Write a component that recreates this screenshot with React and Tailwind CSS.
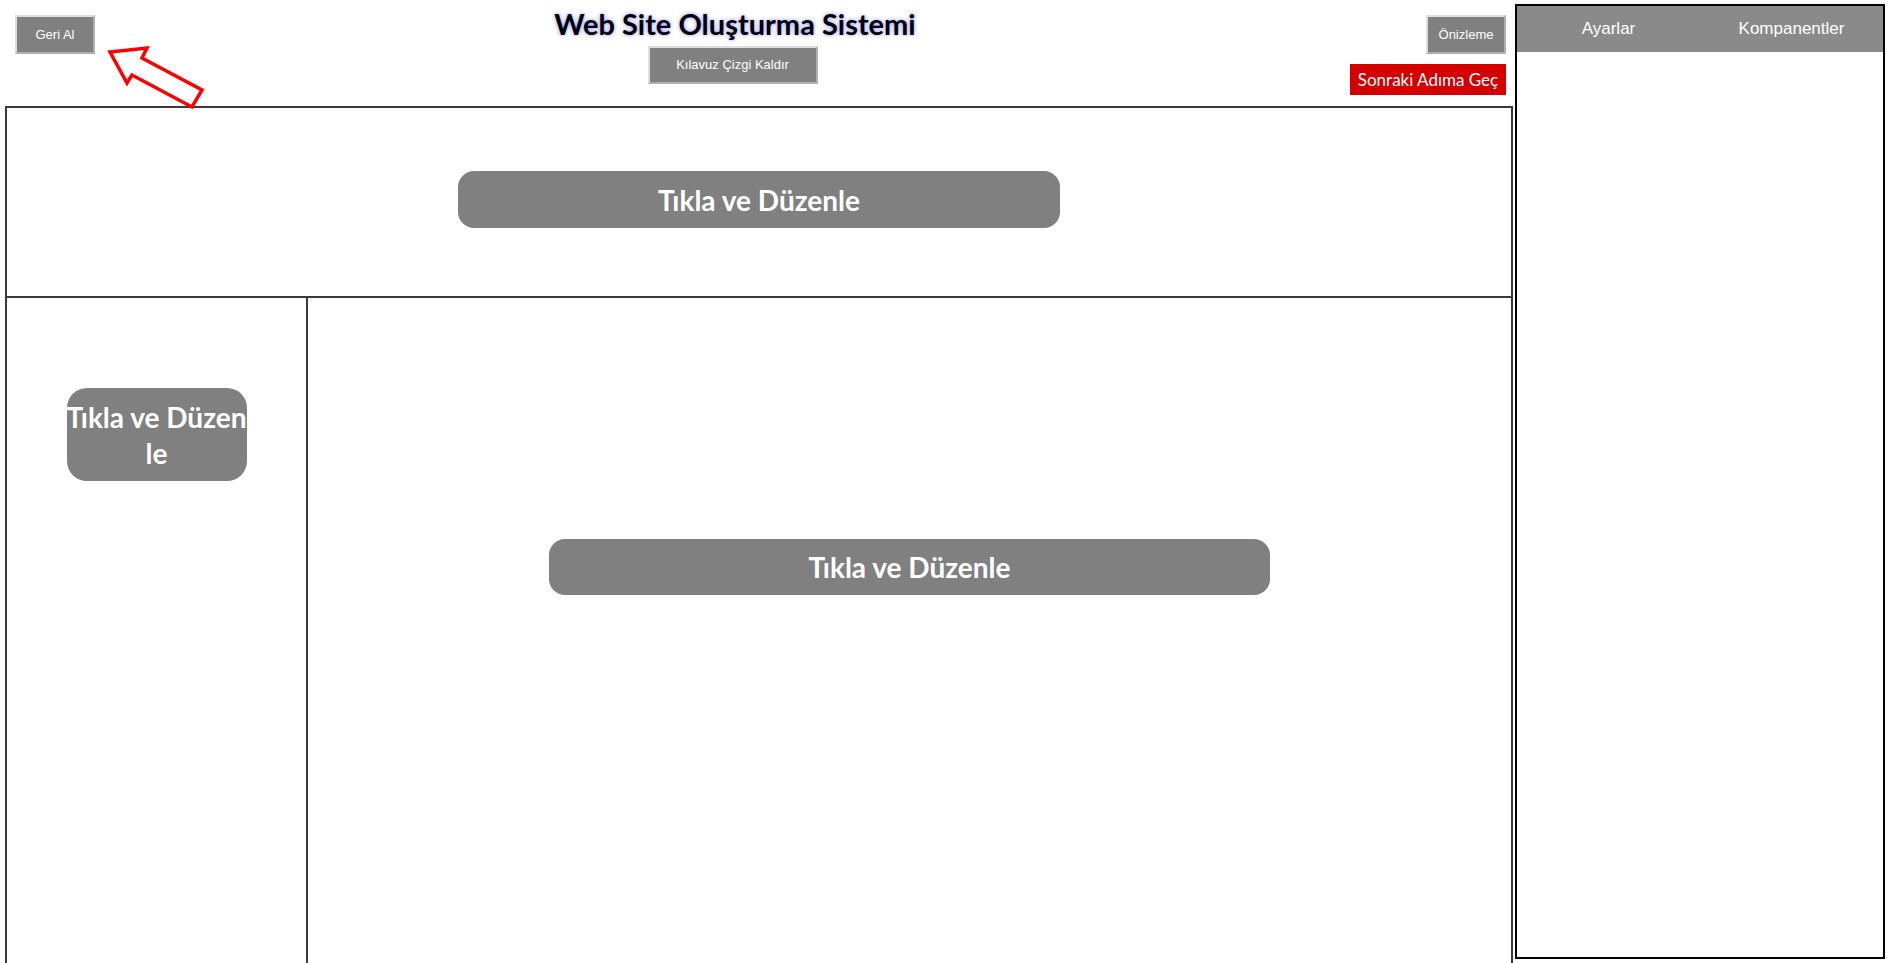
export default function App() {
  const greyBtn =
    'bg-[#808080] text-white text-[13px] border-2 border-t-[#dedede] border-l-[#dedede] border-r-[#b0b0b0] border-b-[#b0b0b0] font-["Liberation_Sans",Arial,sans-serif]';

  return (
    <div className="relative h-screen overflow-hidden bg-white">
      <div className="flex items-start">
        {/* Sol: başlık + tuval */}
        <div className="w-[1513px] shrink-0">
          <header className="flex h-[106px]">
            <div className="w-[500px] pl-[15px] pt-[15px]">
              <button className={`${greyBtn} w-[80px] h-[39px]`}>Geri Al</button>
            </div>
            <div className="w-[470px] flex flex-col items-center pt-[7px]">
              <h1 className='font-["Lato",sans-serif] font-bold text-[29px] leading-[34px] text-black [text-shadow:0_0_4px_#8a8aff]'>
                Web Site Oluşturma Sistemi
              </h1>
              <button className={`${greyBtn} mt-[5px] mr-[5px] w-[170px] h-[38px]`}>Kılavuz Çizgi Kaldır</button>
            </div>
            <div className="flex-1 flex flex-col items-end pr-[7px] pt-[15px]">
              <button className={`${greyBtn} w-[80px] h-[39px]`}>Önizleme</button>
              <button className='mt-[10px] w-[156px] h-[31px] bg-[#d40000] text-white text-[17px] font-["Lato",sans-serif]'>
                Sonraki Adıma Geç
              </button>
            </div>
          </header>

          <main className="ml-[5px] w-[1508px] border-2 border-b-0 border-[#3a3a3a]">
            <section className="h-[190px] flex items-start justify-center pt-[63px] border-b-2 border-[#3a3a3a]">
              <div className='w-2/5 h-[57px] rounded-[16px] bg-[#808080] flex items-center justify-center text-white font-["Lato",sans-serif] font-bold text-[28px]'>
                Tıkla ve Düzenle
              </div>
            </section>
            <section className="flex h-[700px]">
              <div className="w-[301px] shrink-0 border-r-2 border-[#3a3a3a] flex justify-center pt-[90px]">
                <div className='w-[180px] h-[93px] rounded-[20px] bg-[#808080] flex flex-col items-center justify-center text-center whitespace-nowrap text-white font-["Lato",sans-serif] font-bold text-[28px] leading-[36px]'>
                  <span>Tıkla ve Düzen</span>
                  <span>le</span>
                </div>
              </div>
              <div className="flex-1 flex justify-center pt-[241px]">
                <div className='w-3/5 h-[56px] rounded-[16px] bg-[#808080] flex items-center justify-center text-white font-["Lato",sans-serif] font-bold text-[28px]'>
                  Tıkla ve Düzenle
                </div>
              </div>
            </section>
          </main>
        </div>

        {/* Sağ panel */}
        <aside className="ml-[2px] mt-[4px] w-[370px] h-[955px] border-2 border-black shrink-0">
          <div className='grid grid-cols-2 h-[46px] bg-[#8a8a8a] text-white text-[17px] font-["Liberation_Sans",Arial,sans-serif]'>
            <div className="flex items-center justify-center">Ayarlar</div>
            <div className="flex items-center justify-center">Kompanentler</div>
          </div>
        </aside>
      </div>

      {/* Geri Al'ı gösteren ok */}
      <svg className="absolute left-0 top-0 pointer-events-none" width="220" height="120">
        <polygon
          points="110,52 147,48 142,58 202,90 192,107 132,75 127,83"
          fill="none"
          stroke="#ff0000"
          strokeWidth="3.5"
          strokeLinejoin="miter"
        />
      </svg>
    </div>
  );
}
